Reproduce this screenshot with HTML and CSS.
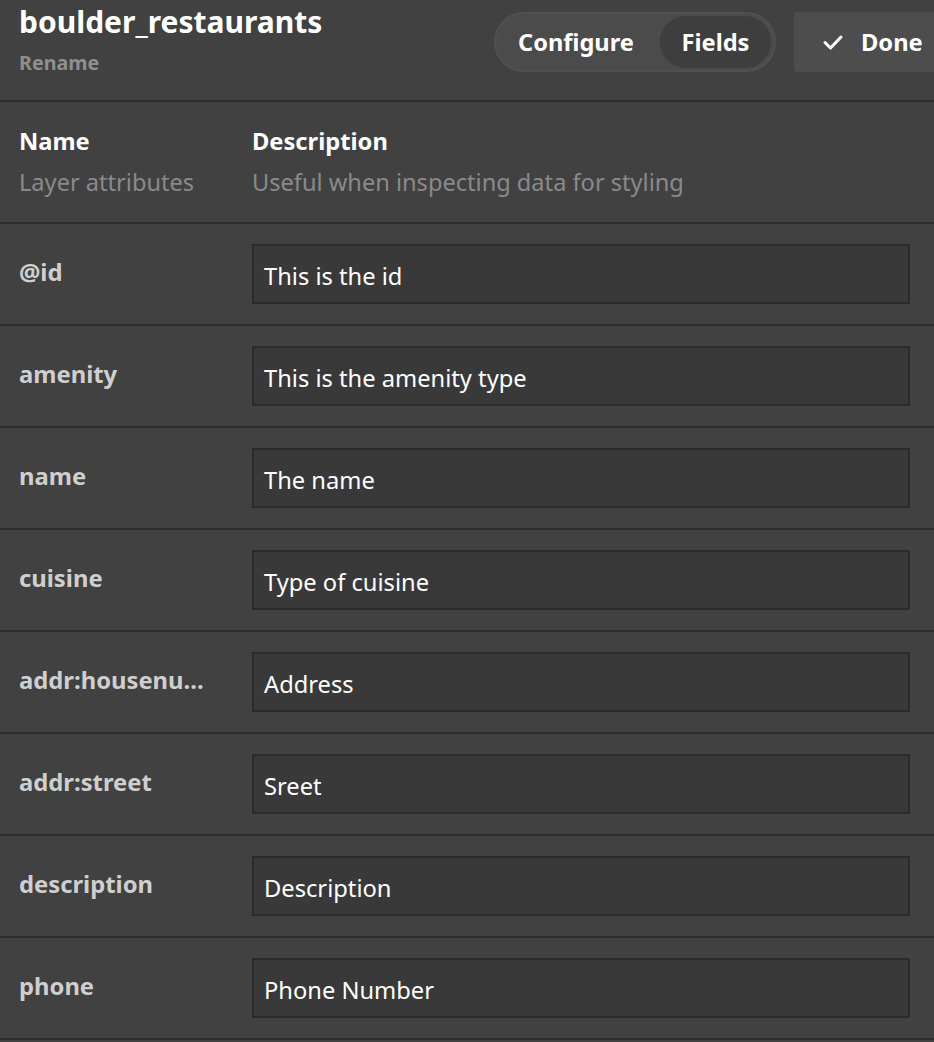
FILE: index.html
```html
<!DOCTYPE html>
<html>
<head>
<meta charset="utf-8">
<link rel="stylesheet" href="styles.css">
</head>
<body>
<div class="panel">
  <header class="top">
    <div class="titles">
      <div class="title">boulder_restaurants</div>
      <div class="rename">Rename</div>
    </div>
    <div class="actions">
      <div class="toggle">
        <span class="tab">Configure</span>
        <span class="tab active">Fields</span>
      </div>
      <button class="done">
        <svg width="22" height="18" viewBox="0 0 22 18"><path d="M3 9.5 L8.5 15 L19 4" fill="none" stroke="#ffffff" stroke-width="3" stroke-linecap="round" stroke-linejoin="round"/></svg>
        <span>Done</span>
      </button>
    </div>
  </header>
  <div class="colhead">
    <div class="c1">
      <div class="h">Name</div>
      <div class="s">Layer attributes</div>
    </div>
    <div class="c2">
      <div class="h">Description</div>
      <div class="s">Useful when inspecting data for styling</div>
    </div>
  </div>
  <div class="row"><div class="label">@id</div><div class="field">This is the id</div></div>
  <div class="row"><div class="label">amenity</div><div class="field">This is the amenity type</div></div>
  <div class="row"><div class="label">name</div><div class="field">The name</div></div>
  <div class="row"><div class="label">cuisine</div><div class="field">Type of cuisine</div></div>
  <div class="row"><div class="label">addr:housenu...</div><div class="field">Address</div></div>
  <div class="row"><div class="label">addr:street</div><div class="field">Sreet</div></div>
  <div class="row"><div class="label">description</div><div class="field">Description</div></div>
  <div class="row"><div class="label">phone</div><div class="field">Phone Number</div></div>
</div>
</body>
</html>
```
FILE: styles.css
```css
html, body {
  margin: 0;
  padding: 0;
  background: #414141;
  font-family: "Noto Sans", "Open Sans", sans-serif;
  color: #ffffff;
  overflow: hidden;
}
.panel {
  width: 934px;
  overflow: hidden;
}
.top {
  height: 102px;
  box-sizing: border-box;
  border-bottom: 2px solid #2d2d2d;
  display: flex;
  justify-content: space-between;
  align-items: flex-start;
  padding-left: 19px;
}
.titles {
  padding-top: 2px;
}
.title {
  font-size: 30px;
  font-weight: 700;
  line-height: 40px;
}
.rename {
  margin-top: 9px;
  font-size: 19.7px;
  font-weight: 700;
  color: #8f8f8f;
  line-height: 24px;
}
.actions {
  display: flex;
  gap: 18px;
  padding-top: 12px;
  margin-right: -20px;
  flex-shrink: 0;
}
.toggle {
  display: flex;
  align-items: center;
  height: 60px;
  box-sizing: border-box;
  width: 282px;
  border-radius: 30px;
  background: #4b4b4b;
  border: 2px solid #505050;
  padding: 0 3px 0 22px;
  justify-content: space-between;
}
.tab {
  font-size: 23.6px;
  font-weight: 700;
  line-height: 30px;
}
.tab.active {
  background: #3e3e3e;
  border-radius: 26px;
  height: 52px;
  box-sizing: border-box;
  padding: 11px 0;
  width: 111px;
  text-align: center;
}
.done {
  height: 60px;
  width: 160px;
  border: none;
  border-radius: 4px;
  background: #4d4d4d;
  color: #ffffff;
  font-family: inherit;
  font-size: 23.7px;
  font-weight: 700;
  display: flex;
  align-items: center;
  gap: 17px;
  padding: 0 0 0 28px;
}
.colhead {
  height: 122px;
  box-sizing: border-box;
  border-bottom: 2px solid #2d2d2d;
  display: flex;
  padding: 23px 0 0 19px;
}
.c1 { width: 233px; }
.h {
  font-size: 23.7px;
  font-weight: 700;
  line-height: 32px;
}
.s {
  margin-top: 10px;
  font-size: 23.6px;
  color: #8a8a8a;
  line-height: 30px;
}
.row {
  height: 102px;
  box-sizing: border-box;
  border-bottom: 2px solid #2d2d2d;
  display: flex;
  align-items: center;
  padding: 0 24px 0 19px;
}
.label {
  width: 233px;
  font-size: 23.8px;
  font-weight: 700;
  color: #cfcfcf;
  white-space: nowrap;
  margin-top: -4px;
}
.field {
  flex: 1;
  height: 60px;
  box-sizing: border-box;
  background: #393939;
  border: 2px solid #2b2b2b;
  font-size: 23.7px;
  line-height: 54px;
  padding: 3px 0 0 10px;
  color: #ffffff;
}
```
